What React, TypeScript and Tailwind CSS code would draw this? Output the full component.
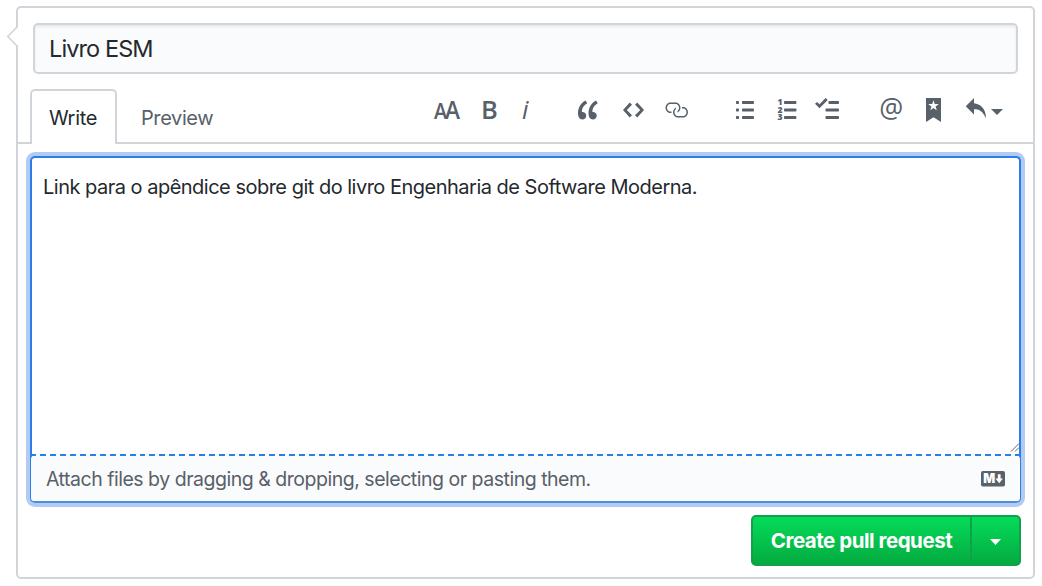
import React from "react";

const Icon = ({ w, d, className = "" }: { w: number; d: string; className?: string }) => (
  <svg className={`shrink-0 ${className}`} width={w * 1.5} height={24} viewBox={`0 0 ${w} 16`} fill="currentColor">
    <path fillRule="evenodd" d={d} />
  </svg>
);

const QUOTE =
  "M6.16 3.5C3.73 5.06 2.55 6.67 2.55 9.36c.16-.05.3-.05.44-.05 1.27 0 2.5.86 2.5 2.41 0 1.61-1.03 2.61-2.5 2.61-1.9 0-2.99-1.52-2.99-4.25 0-3.8 1.75-6.53 5.02-8.42L6.16 3.5zm7 0c-2.43 1.56-3.61 3.17-3.61 5.86.16-.05.3-.05.44-.05 1.27 0 2.5.86 2.5 2.41 0 1.61-1.03 2.61-2.5 2.61-1.89 0-2.98-1.52-2.98-4.25 0-3.8 1.75-6.53 5.02-8.42l1.14 1.84h-.01z";
const CODE = "M9.5 3L8 4.5 11.5 8 8 11.5 9.5 13 14 8 9.5 3zm-5 0L0 8l4.5 5L6 11.5 2.5 8 6 4.5 4.5 3z";
const LINK =
  "M4 9h1v1H4c-1.5 0-3-1.69-3-3.5S2.55 3 4 3h4c1.45 0 3 1.69 3 3.5 0 1.41-.91 2.72-2 3.25V8.59c.58-.45 1-1.27 1-2.09C10 5.22 8.98 4 8 4H4c-.98 0-2 1.22-2 2.5S3 9 4 9zm9-3h-1v1h1c1 0 2 1.22 2 2.5S13.98 12 13 12H9c-.98 0-2-1.22-2-2.5 0-.83.42-1.64 1-2.09V6.25c-1.09.53-2 1.84-2 3.25C6 11.31 7.55 13 9 13h4c1.45 0 3-1.69 3-3.5S14.5 6 13 6z";
const BULLETS =
  "M2 13c0 .59 0 1-.59 1H.59C0 14 0 13.59 0 13c0-.59 0-1 .59-1h.81c.59 0 .59.41.59 1H2zm2.59-9h6.81c.59 0 .59-.41.59-1 0-.59 0-1-.59-1H4.59C4 2 4 2.41 4 3c0 .59 0 1 .59 1zM1.41 7H.59C0 7 0 7.41 0 8c0 .59 0 1 .59 1h.81c.59 0 .59-.41.59-1 0-.59 0-1-.59-1h.01zm0-5H.59C0 2 0 2.41 0 3c0 .59 0 1 .59 1h.81c.59 0 .59-.41.59-1 0-.59 0-1-.59-1h.01zm10 5H4.59C4 7 4 7.41 4 8c0 .59 0 1 .59 1h6.81c.59 0 .59-.41.59-1 0-.59 0-1-.59-1h.01zm0 5H4.59C4 12 4 12.41 4 13c0 .59 0 1 .59 1h6.81c.59 0 .59-.41.59-1 0-.59 0-1-.59-1h.01z";
const TASKS =
  "M15.41 9H7.59C7 9 7 8.59 7 8c0-.59 0-1 .59-1h7.81c.59 0 .59.41.59 1 0 .59 0 1-.59 1h.01zM9.59 4C9 4 9 3.59 9 3c0-.59 0-1 .59-1h5.81c.59 0 .59.41.59 1 0 .59 0 1-.59 1H9.59zM0 3.91l1.41-1.3L3 4.2 7.09 0 8.5 1.41 3 6.91l-3-3zM7.59 12h7.81c.59 0 .59.41.59 1 0 .59 0 1-.59 1H7.59C7 14 7 13.59 7 13c0-.59 0-1 .59-1z";
const BOOKMARK =
  "M10 0H0v16l5-3.09L10 16V0zm-1.78 4.25L6.36 5.61l.72 2.16c.06.22-.02.28-.2.17L5 6.6 3.12 7.94c-.19.11-.25.05-.2-.17l.72-2.16-1.86-1.36c-.17-.16-.14-.23.09-.23l2.3-.03.7-2.16h.25l.7 2.16 2.3.03c.23 0 .27.08.09.23h.01z";
const REPLY = "M6 3.5c3.92.44 8 3.125 8 10-2.312-5.062-4.75-6-8-6V11L.5 5.5 6 0v3.5z";

const NumberedList = () => (
  <svg className="ml-6 shrink-0 overflow-visible" width={19} height={24} viewBox="0 0 19 24" fill="currentColor">
    <g fontFamily="Open Sans, sans-serif" fontWeight={800} fontSize={8.6}>
      <text x={-0.5} y={7.2}>1</text>
      <text x={-0.5} y={14.8}>2</text>
      <text x={-0.5} y={22.4}>3</text>
    </g>
    <rect x={6} y={3} width={12.4} height={3} rx={0.8} />
    <rect x={6} y={10.5} width={12.4} height={3} rx={0.8} />
    <rect x={6} y={18} width={12.4} height={3} rx={0.8} />
  </svg>
);

const Toolbar = () => (
  <div className="flex h-6 items-start font-['Open_Sans',sans-serif] text-[#586069]">
    <svg className="mr-[22px] shrink-0 overflow-visible font-semibold" width={26} height={24} fill="currentColor">
      <text x={0} y={21} fontSize={21} textLength={13} lengthAdjust="spacingAndGlyphs">A</text>
      <text x={11} y={21} fontSize={25.5} textLength={15} lengthAdjust="spacingAndGlyphs">A</text>
    </svg>
    <svg className="mr-[22px] shrink-0 overflow-visible font-semibold" width={17} height={24} fill="currentColor">
      <text x={-1} y={21} fontSize={25.5}>B</text>
    </svg>
    <svg className="mr-[48px] shrink-0 overflow-visible font-medium italic" width={9} height={24} fill="currentColor">
      <text x={1} y={21} fontSize={25.5}>i</text>
    </svg>
    <Icon w={14} d={QUOTE} />
    <Icon w={14} d={CODE} className="ml-6" />
    <Icon w={16} d={LINK} className="ml-5" />
    <Icon w={12} d={BULLETS} className="ml-[48px]" />
    <NumberedList />
    <Icon w={16} d={TASKS} className="ml-[18px]" />
    <svg className="ml-[41px] mr-[22px] shrink-0 overflow-visible" width={24} height={24} fill="currentColor">
      <text x={-0.8} y={20} fontSize={27} textLength={24} lengthAdjust="spacingAndGlyphs">@</text>
    </svg>
    <Icon w={10} d={BOOKMARK} />
    <Icon w={14} d={REPLY} className="ml-6" />
    <svg className="ml-[5px] mt-[11px]" width={12} height={6} viewBox="0 0 12 6" fill="currentColor">
      <path d="M0 0h12L6 6z" />
    </svg>
  </div>
);

export default function App() {
  return (
    <div className="h-[586px] w-[1042px] bg-white pl-4 pt-1.5 font-[Inter,sans-serif] text-[#24292e]">
      <div className="relative flex h-[573px] w-[1019px] flex-col rounded-[5px] border-2 border-[#d1d5da] bg-white">
        <svg className="absolute -left-3 top-[17px]" width={14} height={24} viewBox="0 0 14 24">
          <path d="M14 1.5L12 1.5L2 11.5L12 21.5L14 21.5Z" fill="#fff" />
          <path d="M11.5 1.5L1.8 11.5L11.5 21.5" fill="none" stroke="#d1d5da" strokeWidth={1.6} />
        </svg>

        <div className="mx-[15px] mt-[15px] flex h-[51px] shrink-0 items-center rounded-[5px] border-2 border-[#d1d5da] bg-[#fafbfc] px-3.5 text-[23.5px] shadow-[inset_0_2px_3px_rgba(27,31,35,0.075)]">
          <span className="tracking-[-0.9px]">Livro ESM</span>
        </div>

        <div className="mt-[15px] flex h-[55px] shrink-0 items-end">
          <div className="h-0.5 w-3 bg-[#d1d5da]" />
          <div className="flex h-[55px] w-[87px] items-center justify-center rounded-t-[5px] border-2 border-b-0 border-[#d1d5da] pr-px text-[20px]">
            <span className="tracking-[-0.3px]">Write</span>
          </div>
          <div className="flex h-[55px] flex-1 items-start border-b-2 border-[#d1d5da] pl-6">
            <div className="mt-[13px] w-[293px] text-[20px] leading-8 text-[#586069]">
              <span className="tracking-[-0.4px]">Preview</span>
            </div>
            <div className="mt-[9px]">
              <Toolbar />
            </div>
          </div>
        </div>

        <div className="ml-3 mt-3 flex h-[347px] w-[991px] shrink-0 flex-col rounded-[5px] border-2 border-[#2a7ee8] border-b-[#4a90e2] bg-white shadow-[0_0_0_4px_#b3cbf3]">
          <div className="relative h-[296px] px-[11px] pt-[13px] text-[20px] leading-8">
            <span className="whitespace-nowrap tracking-[-0.505px]">
              Link para o apêndice sobre git do livro Engenharia de Software Moderna.
            </span>
            <svg className="absolute bottom-0.5 right-0" width={9} height={9} viewBox="0 0 9 9" stroke="#555" strokeWidth={0.9}>
              <path d="M1 8.500L9 0.500M5 8.500L9 4.500" />
            </svg>
          </div>
          <div className="h-0.5 bg-[repeating-linear-gradient(90deg,#2a7ee8_0px,#2a7ee8_4px,#fafbfc_4px,#fafbfc_8px,#2a7ee8_8px,#2a7ee8_9.95px)]" />
          <div className="-mx-px flex flex-1 items-center justify-between rounded-[3px] bg-[#fafbfc] px-[15px] text-[19.5px] text-[#586069]">
            <span className="whitespace-nowrap pt-0.5 tracking-[-0.48px]">
              Attach files by dragging &amp; dropping, selecting or pasting them.
            </span>
            <svg width={24} height={16} viewBox="0 0 24 16">
              <rect width={24} height={15.5} rx={1.8} fill="#586069" />
              <text x={2.3} y={12.4} fontFamily="Inter, sans-serif" fontWeight={900} fontSize={12.5} fill="#fff">M</text>
              <path d="M16.8 3.2h2.8v4.3h2.4l-3.8 4.8-3.8-4.8h2.4z" fill="#fff" />
            </svg>
          </div>
        </div>

        <div className="mr-3 mt-3 flex h-[51px] w-[270px] shrink-0 self-end overflow-hidden rounded-[5px] border-2 border-[#12a04a] bg-linear-to-b from-[#04dc5a] to-[#04ab40] text-white">
          <div className="flex w-[219px] items-center justify-center border-r-2 border-[#12a04a] text-[20.5px] font-bold">
            <span className="whitespace-nowrap pt-0.5 tracking-[-0.47px]">Create pull request</span>
          </div>
          <div className="flex flex-1 items-center justify-center pt-0.5">
            <svg width={11} height={6} viewBox="0 0 11 6" fill="#fff">
              <path d="M0 0h11L5.500 6z" />
            </svg>
          </div>
        </div>
      </div>
    </div>
  );
}
